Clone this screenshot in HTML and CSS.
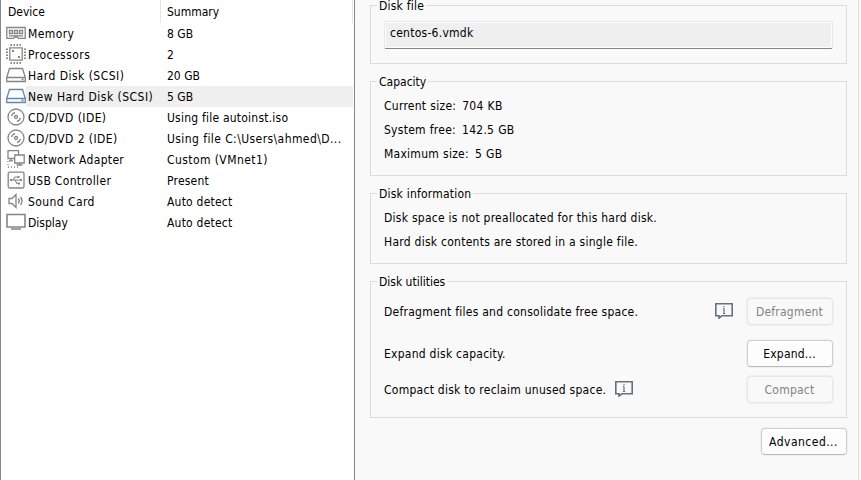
FILE: index.html
```html
<!DOCTYPE html>
<html lang="en">
<head>
<meta charset="utf-8">
<title>Virtual Machine Settings</title>
<link rel="stylesheet" href="styles.css">
</head>
<body>
<svg class="defs" width="0" height="0">
  <symbol id="disk" viewBox="0 0 20 20"><path d="M3.500 3.500h13l2.800 9v4H.7v-4zM.7 12.500h18.600M15.500 14.500h2"/></symbol>
  <symbol id="disc" viewBox="0 0 20 20"><circle cx="10" cy="10" r="8"/><circle cx="10" cy="10" r="1.500"/><path d="M5.500 9A5 5 0 0 1 9 5.500M14.500 11A5 5 0 0 1 11 14.500"/></symbol>
  <symbol id="info" viewBox="0 0 18 16"><path d="M.8 .8h16.400v12H7l-3 2.200v-2.200H.8z"/><path class="mark" d="M9 5.500v5M9 3v1.300M8 5.500h1M8 10.500h2.200"/></symbol>
</svg>
<main class="window">
  <section class="devices">
    <div class="row head"><span class="name">Device</span><span class="summary">Summary</span></div>
    <div class="row"><svg class="icon" viewBox="0 0 20 20"><path d="M.8 4.500h18.400v10.800h-6.700l-1-1.200h-3l-1 1.200H.8zM3.500 7.500h3v3h-3zM8.500 7.500h3v3h-3zM13.500 7.500h3v3h-3zM3 12.800h14"/></svg><span class="name w4">Memory</span><span class="summary">8 GB</span></div>
    <div class="row"><svg class="icon" viewBox="0 0 20 20"><path d="M3.800 3.800h12.400v12.400H3.800z"/><path d="M4.500 1h12M4.500 19h12M1 4.500v12M19 4.500v12" stroke-width="2" stroke-dasharray="1.500 1.500"/><path d="M6 7h2M12 13h2" stroke-width="2"/></svg><span class="name w5">Processors</span><span class="summary">2</span></div>
    <div class="row"><svg class="icon"><use href="#disk"/></svg><span class="name w5">Hard Disk (SCSI)</span><span class="summary">20 GB</span></div>
    <div class="row selected"><svg class="icon"><use href="#disk"/></svg><span class="name w5">New Hard Disk (SCSI)</span><span class="summary">5 GB</span></div>
    <div class="row"><svg class="icon"><use href="#disc"/></svg><span class="name w4">CD/DVD (IDE)</span><span class="summary w2">Using file autoinst.iso</span></div>
    <div class="row"><svg class="icon"><use href="#disc"/></svg><span class="name w4">CD/DVD 2 (IDE)</span><span class="summary w4">Using file C:\Users\ahmed\D...</span></div>
    <div class="row"><svg class="icon" viewBox="0 0 20 20"><path d="M8.500 9.500H2V1.700h10.500v4M8.700 6h9.500v8H8.700zM13.500 14v2M10.500 16h6M5 9.500v2M3 11.800h4"/><path d="M2 12v6h11" stroke-dasharray="1 2"/></svg><span class="name w3">Network Adapter</span><span class="summary w4">Custom (VMnet1)</span></div>
    <div class="row"><svg class="icon" viewBox="0 0 20 20"><rect x="2.200" y="2.200" width="15.800" height="15.800" rx="1.500"/><path d="M4 10h11M7 10l2-3h3M9 10l2 3.500h2" stroke-width="1.100"/><path d="M4 10h2M11.500 7h2M12 13.500h2M14 10h2" stroke-width="2"/></svg><span class="name w3">USB Controller</span><span class="summary w2">Present</span></div>
    <div class="row"><svg class="icon" viewBox="0 0 20 20"><path d="M3 7.500h3l4-4v13l-4-4H3zM12.300 7.500q1.800 2.500 0 5M14.500 6q3 4 0 8" stroke-width="1.300"/></svg><span class="name w4">Sound Card</span><span class="summary w2">Auto detect</span></div>
    <div class="row"><svg class="icon" viewBox="0 0 20 20"><path d="M1 2.500h18v12.500H1zM5 17h10" stroke-width="1.600"/></svg><span class="name">Display</span><span class="summary w2">Auto detect</span></div>
  </section>
  <section class="details">
    <div class="group file"><h2 class="w2">Disk file</h2><div class="field">centos-6.vmdk</div></div>
    <div class="group capacity"><h2>Capacity</h2>
      <p><span class="label">Current size:</span>704 KB</p><p><span class="label">System free:</span>142.5 GB</p><p><span class="label">Maximum size:</span>5 GB</p></div>
    <div class="group information"><h2 class="w2">Disk information</h2>
      <p>Disk space is not preallocated for this hard disk.</p><p>Hard disk contents are stored in a single file.</p></div>
    <div class="group utilities"><h2>Disk utilities</h2>
      <div class="tool first"><span>Defragment files and consolidate free space.</span><svg class="info end"><use href="#info"/></svg><button disabled>Defragment</button></div>
      <div class="tool"><span>Expand disk capacity.</span><button>Expand...</button></div>
      <div class="tool last"><span>Compact disk to reclaim unused space.</span><svg class="info"><use href="#info"/></svg><button disabled>Compact</button></div>
    </div>
    <button class="advanced w5">Advanced...</button>
  </section>
  <div class="edge"></div>
</main>
</body>
</html>
```

FILE: styles.css
```css
* { box-sizing: border-box; }
body { margin: 0; overflow: hidden; background: #f9f9f9; color: #000; font: 12px/15px "DejaVu Sans Condensed", "DejaVu Sans", sans-serif; font-stretch: condensed; }
.defs { position: absolute; }
svg { fill: none; stroke: #858585; stroke-width: 1.3; }
.w2 { letter-spacing: .22px; }
.w3 { letter-spacing: .32px; }
.w4 { letter-spacing: .42px; }
.w5 { letter-spacing: .48px; }
.window { display: flex; height: 480px; }
.devices { width: 355px; background: #fff; border-left: 1px solid #828790; border-right: 1px solid #828790; }
.row { display: flex; height: 21px; margin-right: 1px; line-height: 22px; white-space: nowrap; }
.row .name { width: 136px; padding-left: 2px; }
.row .summary { padding-left: 5px; }
.icon { width: 20px; height: 20px; margin-left: 5px; flex: none; }
.row.head { height: 23px; border-right: 1px solid #e5e5e5; line-height: 24px; }
.row.head .name { width: 160px; height: 23px; padding-left: 7px; border-right: 1px solid #e5e5e5; }
.row.head .summary { padding-left: 6px; }
.selected { background: linear-gradient(90deg, #fff 25px, #efefef 25px); }
.selected svg { stroke: #6088ad; }
.details { width: 503px; padding: 5px 11px 0 15px; }
.group { border: 1px solid #dcdcdc; width: 477px; padding: 0 13px; }
.group h2 { width: max-content; height: 15px; margin: -7px 0 0 -7px; padding: 0 2px; background: #f9f9f9; font-size: 12px; font-weight: normal; line-height: 15px; }
.file { height: 59px; }
.field { height: 28px; margin: 7px 0 0; padding: 4px 5px; background: #efefef; border: 1px solid #e8e8e8; border-bottom: 1px solid #868686; border-radius: 2px; box-shadow: inset 0 0 0 1px #fcfcfc; letter-spacing: .26px; }
.capacity { height: 95px; margin-top: 17px; }
.group p { height: 24px; margin: 0; line-height: 24px; letter-spacing: .26px; white-space: nowrap; }
.group h2 + p { margin-top: 4px; }
.label { margin-right: 6px; }
.capacity p { word-spacing: .3px; }
.information { height: 71px; margin-top: 17px; }
.utilities { height: 137px; margin-top: 17px; }
.tool { display: flex; align-items: center; height: 28px; margin-top: 14px; letter-spacing: .26px; white-space: nowrap; }
.tool > span { padding-top: 1px; }
.tool.first { margin-top: 8px; }
.tool.last { margin-top: 8px; }
.tool button { margin: 0 0 1px auto; }
.info { width: 18px; height: 16px; margin: 0 0 2px 9px; stroke: #65727e; stroke-width: 1.6; }
.mark { stroke-width: 1.2; }
.info.end { margin-left: auto; margin-right: 14px; }
.info.end + button { margin-left: 0; }
button { width: 86px; height: 27px; padding: 1px 1px 0 0; font: inherit; letter-spacing: .22px; color: #000; background: #fdfdfd; border: 1px solid #d0d0d0; border-bottom-color: #b9b9b9; border-radius: 4px; box-shadow: 0 0 0 1px #f0f0f0; }
button:disabled { color: #838383; background: #f9f9f9; border-color: #e7e7e7; }
.advanced { display: block; margin: 10px 0 0 auto; }
.edge { flex: 1; border-left: 1px solid #e0e0e0; }
```
